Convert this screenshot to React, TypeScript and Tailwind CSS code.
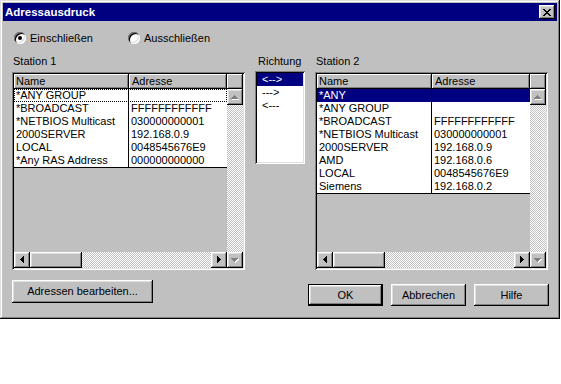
import React from "react";

const RAISED =
  "shadow-[inset_-1px_-1px_0_#000,inset_1px_1px_0_#fff,inset_-2px_-2px_0_#808080,inset_2px_2px_0_#dfdfdf]";
const SUNKEN =
  "shadow-[inset_1px_1px_0_#808080,inset_-1px_-1px_0_#fff,inset_2px_2px_0_#000,inset_-2px_-2px_0_#dfdfdf]";
const FRAME =
  "shadow-[inset_-1px_-1px_0_#000,inset_1px_1px_0_#dfdfdf,inset_-2px_-2px_0_#808080,inset_2px_2px_0_#fff]";
const HEADER =
  "shadow-[inset_-1px_-1px_0_#000,inset_1px_1px_0_#fff,inset_-2px_-2px_0_#808080]";
const CHECKER =
  "bg-[image:repeating-conic-gradient(#c0c0c0_0%_25%,#fff_0%_50%)] bg-[length:2px_2px]";

type Dir = "up" | "down" | "left" | "right";

function tri(dir: Dir): [number, number, number, number][] {
  const r: [number, number, number, number][] = [];
  for (let i = 0; i < 4; i++) {
    if (dir === "up") r.push([3 - i, i, 1 + 2 * i, 1]);
    if (dir === "down") r.push([i, i, 7 - 2 * i, 1]);
    if (dir === "left") r.push([i, 3 - i, 1, 1 + 2 * i]);
    if (dir === "right") r.push([i, i, 1, 7 - 2 * i]);
  }
  return r;
}

function ArrowBtn({ dir, disabled }: { dir: Dir; disabled?: boolean }) {
  const vertical = dir === "up" || dir === "down";
  const w = vertical ? 8 : 5;
  const h = vertical ? 5 : 8;
  const rects = tri(dir);
  return (
    <div
      className={`w-[16px] h-[16px] shrink-0 bg-[#c0c0c0] flex items-center justify-center ${RAISED}`}
    >
      <svg width={w} height={h} shapeRendering="crispEdges">
        {disabled &&
          rects.map(([x, y, rw, rh], i) => (
            <rect key={"w" + i} x={x + 1} y={y + 1} width={rw} height={rh} fill="#fff" />
          ))}
        {rects.map(([x, y, rw, rh], i) => (
          <rect
            key={i}
            x={x}
            y={y}
            width={rw}
            height={rh}
            fill={disabled ? "#808080" : "#000"}
          />
        ))}
      </svg>
    </div>
  );
}

function Radio({ checked }: { checked?: boolean }) {
  return (
    <div
      className={`w-[12px] h-[12px] rounded-full bg-white flex items-center justify-center shrink-0 ${SUNKEN}`}
    >
      {checked && <div className="w-[4px] h-[4px] rounded-full bg-black" />}
    </div>
  );
}

type Row = [string, string];

function ListView({
  rows,
  selected,
  focused,
}: {
  rows: Row[];
  selected?: number;
  focused?: number;
}) {
  return (
    <div className={`w-[233px] h-[198px] p-[2px] bg-[#c0c0c0] ${SUNKEN}`}>
      <div className="flex flex-col h-full">
        <div className="flex h-[15px] shrink-0 leading-[14px]">
          <div className={`w-[115px] pl-[2px] ${HEADER}`}>Name</div>
          <div className={`flex-1 pl-[3px] ${HEADER}`}>Adresse</div>
          <div className={`w-[16px] ${HEADER}`} />
        </div>
        <div className="flex flex-1 min-h-0">
          <div className="flex-1 flex flex-col min-w-0">
            <div className="flex-1 bg-[#c0c0c0]">
              <div className="bg-white border-b border-black">
                {rows.map(([n, a], i) => {
                  const sel = i === selected;
                  const foc = i === focused;
                  return (
                    <div
                      key={i}
                      className={`flex h-[13px] leading-[13px] whitespace-nowrap ${
                        sel ? "bg-[#000080] text-white" : ""
                      } ${foc ? "outline-1 outline-dotted outline-black -outline-offset-1" : ""}`}
                    >
                      <div className="w-[115px] pl-[2px] border-r border-black overflow-hidden">
                        {n}
                      </div>
                      <div className="flex-1 pl-[2px] overflow-hidden">{a}</div>
                    </div>
                  );
                })}
              </div>
            </div>
            <div className="flex h-[16px] shrink-0">
              <ArrowBtn dir="left" />
              <div className={`w-[52px] h-[16px] bg-[#c0c0c0] ${RAISED}`} />
              <div className={`flex-1 ${CHECKER}`} />
              <ArrowBtn dir="right" />
            </div>
          </div>
          <div className="flex flex-col w-[16px] shrink-0">
            <ArrowBtn dir="up" disabled />
            <div className={`flex-1 ${CHECKER}`} />
            <ArrowBtn dir="down" disabled />
          </div>
        </div>
      </div>
    </div>
  );
}

function Button({
  children,
  className,
  isDefault,
}: {
  children: React.ReactNode;
  className: string;
  isDefault?: boolean;
}) {
  if (isDefault) {
    return (
      <div className={`border border-black ${className}`}>
        <div
          className={`w-full h-full bg-[#c0c0c0] flex items-center justify-center ${RAISED}`}
        >
          {children}
        </div>
      </div>
    );
  }
  return (
    <div
      className={`bg-[#c0c0c0] flex items-center justify-center ${RAISED} ${className}`}
    >
      {children}
    </div>
  );
}

const list1: Row[] = [
  ["*ANY GROUP", ""],
  ["*BROADCAST", "FFFFFFFFFFFF"],
  ["*NETBIOS Multicast", "030000000001"],
  ["2000SERVER", "192.168.0.9"],
  ["LOCAL", "0048545676E9"],
  ["*Any RAS Address", "000000000000"],
];

const list2: Row[] = [
  ["*ANY", ""],
  ["*ANY GROUP", ""],
  ["*BROADCAST", "FFFFFFFFFFFF"],
  ["*NETBIOS Multicast", "030000000001"],
  ["2000SERVER", "192.168.0.9"],
  ["AMD", "192.168.0.6"],
  ["LOCAL", "0048545676E9"],
  ["Siemens", "192.168.0.2"],
];

export default function App() {
  return (
    <div className="w-[561px] h-[384px] bg-white">
      <div
        className={`w-[560px] h-[319px] bg-[#c0c0c0] p-[3px] flex flex-col text-[11px] text-black font-[family-name:Liberation_Sans,Arial,sans-serif] ${FRAME}`}
      >
        <div className="h-[18px] shrink-0 bg-[#000080] flex items-center justify-between pl-[2px] pr-[2px]">
          <span className="text-white font-bold text-[11.5px] leading-[13px]">
            Adressausdruck
          </span>
          <div
            className={`w-[16px] h-[14px] bg-[#c0c0c0] flex items-center justify-center ${RAISED}`}
          >
            <svg width="8" height="7" shapeRendering="crispEdges">
              <rect x="0" y="0" width="2" height="1" fill="#000" />
              <rect x="6" y="0" width="2" height="1" fill="#000" />
              <rect x="1" y="1" width="2" height="1" fill="#000" />
              <rect x="5" y="1" width="2" height="1" fill="#000" />
              <rect x="2" y="2" width="4" height="1" fill="#000" />
              <rect x="3" y="3" width="2" height="1" fill="#000" />
              <rect x="2" y="4" width="4" height="1" fill="#000" />
              <rect x="1" y="5" width="2" height="1" fill="#000" />
              <rect x="5" y="5" width="2" height="1" fill="#000" />
              <rect x="0" y="6" width="2" height="1" fill="#000" />
              <rect x="6" y="6" width="2" height="1" fill="#000" />
            </svg>
          </div>
        </div>

        <div className="flex-1 flex flex-col pl-[9px] pr-[8px]">
          <div className="mt-[11px] h-[12px] flex items-center leading-[12px]">
            <div className="w-[116px] pl-[2px] flex items-center gap-[4px]">
              <Radio checked />
              <span>Einschließen</span>
            </div>
            <div className="flex items-center gap-[4px]">
              <Radio />
              <span>Ausschließen</span>
            </div>
          </div>

          <div className="mt-[11px] flex gap-[10px]">
            <div className="flex flex-col">
              <div className="h-[13px] leading-[13px] pl-[1px]">Station 1</div>
              <div className="mt-[4px]">
                <ListView rows={list1} focused={0} />
              </div>
            </div>
            <div className="flex flex-col">
              <div className="h-[13px] leading-[13px] pl-[3px]">Richtung</div>
              <div
                className={`mt-[3px] w-[50px] h-[93px] p-[2px] bg-white ${SUNKEN}`}
              >
                <div className="h-[13px] leading-[13px] pl-[5px] bg-[#000080] text-white">
                  {"<-->"}
                </div>
                <div className="h-[13px] leading-[13px] pl-[5px]">{"--->"}</div>
                <div className="h-[13px] leading-[13px] pl-[5px]">{"<---"}</div>
              </div>
            </div>
            <div className="flex flex-col">
              <div className="h-[13px] leading-[13px] pl-[1px]">Station 2</div>
              <div className="mt-[4px]">
                <ListView rows={list2} selected={0} />
              </div>
            </div>
          </div>

          <div className="flex items-start justify-between">
            <Button className="mt-[10px] w-[141px] h-[23px]">
              Adressen bearbeiten...
            </Button>
            <div className="mt-[14px] flex gap-[8px]">
              <Button isDefault className="w-[75px] h-[22px]">
                OK
              </Button>
              <Button className="w-[75px] h-[22px]">Abbrechen</Button>
              <Button className="w-[75px] h-[22px]">Hilfe</Button>
            </div>
          </div>
        </div>
      </div>
    </div>
  );
}
